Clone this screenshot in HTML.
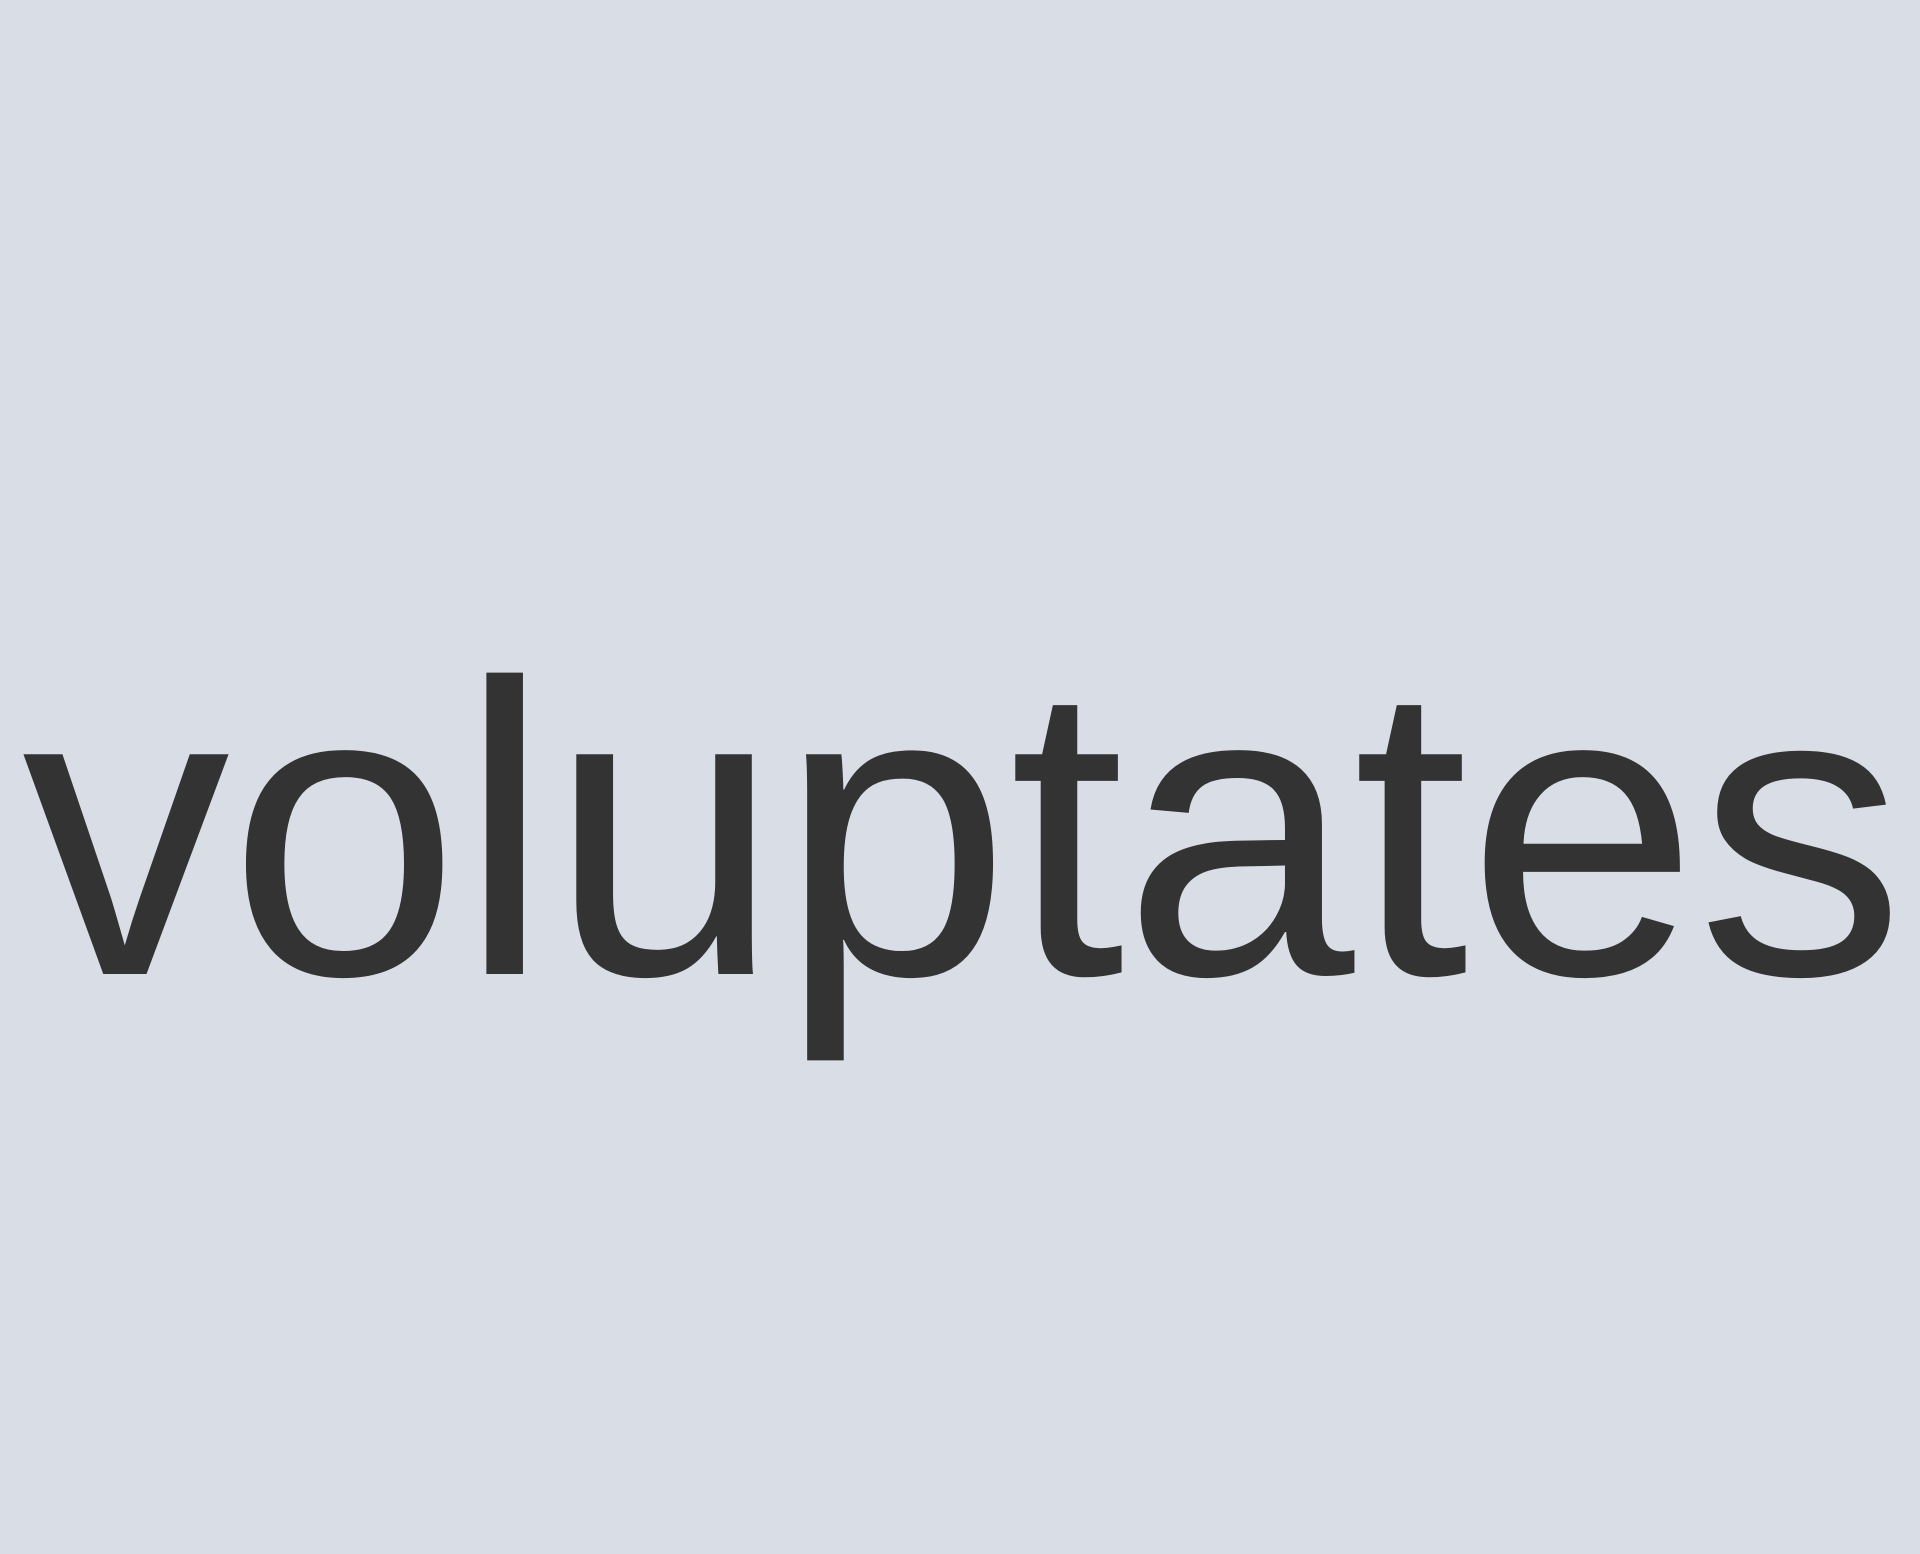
<!DOCTYPE html>
<html><head><style>
html,body{margin:0;padding:0;width:1920px;height:1554px;background:#d9dee6;overflow:hidden}
.t{position:absolute;left:22px;top:623px;font-family:"Liberation Sans",sans-serif;font-size:416px;line-height:1;color:#333333;white-space:nowrap;letter-spacing:-1.5px}
</style></head><body>
<div class="t">voluptates</div>
</body></html>
